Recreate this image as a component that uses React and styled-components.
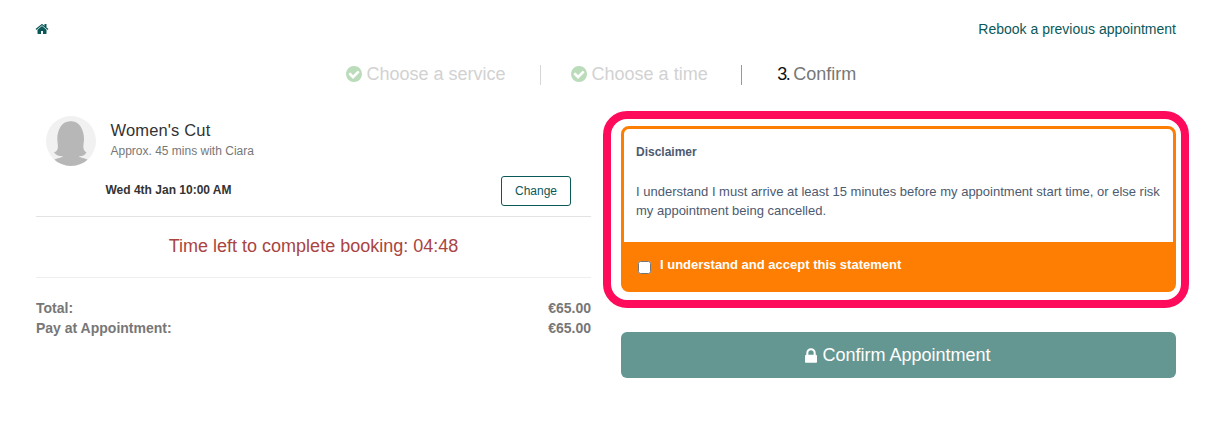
import React from 'react';

import styled, { createGlobalStyle } from "styled-components";


const GlobalStyle = createGlobalStyle`
    * {
        box-sizing: border-box;
    }

    body {
        margin: 0;
        background-color: #fff;
        font-family: "Liberation Sans", Arial, sans-serif;
        font-size: 14px;
        line-height: 20px;
        color: #333;
    }

    h3, p {
        margin: 0;
    }
`;

const HomeIcon = () => (
    <svg width="14" height="14" viewBox="0 0 1792 1792" fill="currentColor">
        <path d="M1472 992v480q0 26-19 45t-45 19h-384v-384h-256v384h-384q-26 0-45-19t-19-45v-480q0-1 .5-3t.5-3l575-474 575 474q1 2 1 6zm223-69l-62 74q-8 9-21 11h-3q-13 0-21-7l-692-577-692 577q-12 8-24 7-13-2-21-11l-62-74q-8-10-7-23.5t11-21.5l719-599q32-26 76-26t76 26l244 204v-195q0-14 9-23t23-9h192q14 0 23 9t9 23v408l219 182q10 8 11 21.5t-7 23.5z" />
    </svg>
);

const CheckIcon = () => (
    <svg width="16" height="16" viewBox="128 128 1536 1536" fill="#bbdcbb">
        <path d="M1412 734q0-28-18-46l-91-90q-19-19-45-19t-45 19l-408 407-226-226q-19-19-45-19t-45 19l-91 90q-18 18-18 46 0 27 18 45l362 362q19 19 45 19 27 0 46-19l543-543q18-18 18-45zm252 162q0 209-103 385.5t-279.5 279.5-385.5 103-385.5-103-279.5-279.5-103-385.5 103-385.5 279.5-279.5 385.5-103 385.5 103 279.5 279.5 103 385.5z" />
    </svg>
);

const LockIcon = () => (
    <svg width="12" height="15" viewBox="320 128 1152 1408" fill="currentColor">
        <path d="M640 768h512v-192q0-106-75-181t-181-75-181 75-75 181v192zm832 96v576q0 40-28 68t-68 28h-960q-40 0-68-28t-28-68v-576q0-40 28-68t68-28h32v-192q0-184 132-316t316-132 316 132 132 316v192h32q40 0 68 28t28 68z" />
    </svg>
);

const Avatar = () => (
    <svg width="50" height="50" viewBox="0 0 50 50">
        <clipPath id="avatar-clip">
            <circle cx="25" cy="25" r="25" />
        </clipPath>
        <g clipPath="url(#avatar-clip)">
            <rect width="50" height="50" fill="#f1f1f1" />
            <path fill="#b7b7b7" d="M25 5.200C33 4.500 38 14 38 22.500C38 29 35.500 33 40.500 36.500C38.500 40 35.500 40.300 33 40.100C34 42.300 38 41.500 43 44.500V50H7V44.500C12 41.500 16 42.300 17 40.100C14.500 40.300 10.500 40 8 36.500C14 34 11.300 29 11.300 22.500C11.300 14 16 4.500 25 5.200Z" />
        </g>
    </svg>
);


export const App = () => {
  return (
    <Page>
        <GlobalStyle />
        <TopBar>
            <HomeLink href="#"><HomeIcon /></HomeLink>
            <RebookLink href="#">Rebook a previous appointment</RebookLink>
        </TopBar>
        <Steps>
            <Step $done><CheckIcon /><span>Choose a service</span></Step>
            <Divider $faded />
            <Step $done><CheckIcon /><span>Choose a time</span></Step>
            <Divider />
            <Step><b>3.</b><span>Confirm</span></Step>
        </Steps>
        <Columns>
            <div>
                <Service>
                    <Avatar />
                    <div className="desc">
                        <h3>Women's Cut</h3>
                        <p>Approx. 45 mins with Ciara</p>
                    </div>
                </Service>
                <Slot>
                    <span>Wed 4th Jan 10:00 AM</span>
                    <ChangeButton>Change</ChangeButton>
                </Slot>
                <Countdown>Time left to complete booking: 04:48</Countdown>
                <Totals>
                    <TotalRow><span>Total:</span><span>€65.00</span></TotalRow>
                    <TotalRow><span>Pay at Appointment:</span><span>€65.00</span></TotalRow>
                </Totals>
            </div>
            <div>
                <DisclaimerCard>
                    <DisclaimerText>
                        <h3>Disclaimer</h3>
                        <p>I understand I must arrive at least 15 minutes before my appointment start time, or else risk my appointment being cancelled.</p>
                    </DisclaimerText>
                    <Accept>
                        <input type="checkbox" />
                        <span>I understand and accept this statement</span>
                    </Accept>
                    <Highlight />
                </DisclaimerCard>
                <ConfirmButton><LockIcon /><span>Confirm Appointment</span></ConfirmButton>
            </div>
        </Columns>
    </Page>
  );
}

const Page = styled.div`
    width: 1218px;
    height: 426px;
    padding: 19px 42px 0 36px;
    overflow: hidden;
`;

const TopBar = styled.div`
    display: flex;
    justify-content: space-between;
    height: 46px;
`;

const HomeLink = styled.a`
    color: #0b5859;
    margin-left: -1px;
    padding-top: 3px;

    svg {
        display: block;
    }
`;

const RebookLink = styled.a`
    color: #0b5859;
    text-decoration: none;
`;

const Steps = styled.div`
    display: flex;
    align-items: center;
    height: 20px;
    padding-left: 310px;
`;

const Step = styled.div`
    display: flex;
    align-items: center;
    gap: ${props => props.$done ? "4.5px" : "4px"};
    font-size: 18px;
    color: ${props => props.$done ? "#d2d2d2" : "#777"};

    svg {
        margin-top: -2px;
    }

    span {
        padding-bottom: 2px;
    }

    b {
        padding-bottom: 2px;
        color: #111;
        font-weight: normal;
        letter-spacing: -1.5px;
    }
`;

const Divider = styled.div`
    width: 1px;
    height: 20px;
    margin: 0 ${props => props.$faded ? "30px" : "35px"} 0 ${props => props.$faded ? "34.5px" : "33.5px"};
    background-color: ${props => props.$faded ? "#d6d6d6" : "#999"};
`;

const Columns = styled.div`
    display: grid;
    grid-template-columns: 555px 555px;
    gap: 30px;
    padding-top: 31px;
`;

const Service = styled.div`
    display: flex;
    height: 50px;
    padding-left: 10px;

    .desc {
        padding: 4px 0 0 14.5px;
    }

    h3 {
        margin-bottom: 1px;
        font-size: 16.5px;
        font-weight: normal;
        letter-spacing: 0.15px;
        line-height: 20px;
    }

    p {
        font-size: 12px;
        color: #777;
    }
`;

const Slot = styled.div`
    display: flex;
    align-items: flex-start;
    justify-content: space-between;
    height: 51px;
    padding: 10px 20px 0 69.5px;
    border-bottom: 1px solid #e3e3e3;
    font-size: 12px;
    font-weight: bold;

    span {
        padding-top: 4px;
    }
`;

const ChangeButton = styled.button`
    width: 70px;
    height: 30px;
    padding: 0;
    border: 1px solid #0b5859;
    border-radius: 3px;
    background-color: #fff;
    color: #0b5859;
    font-family: inherit;
    font-size: 12px;
`;

const Countdown = styled.div`
    height: 61px;
    padding-top: 19px;
    border-bottom: 1px solid #eee;
    color: #a94442;
    font-size: 18px;
    text-align: center;
`;

const Totals = styled.div`
    padding-top: 20px;
    color: #777;
    font-weight: bold;
`;

const TotalRow = styled.div`
    display: flex;
    justify-content: space-between;
`;

const DisclaimerCard = styled.div`
    position: relative;
    height: 166px;
    margin-top: 10px;
    border: 3px solid #fd7e02;
    border-radius: 8px;
    color: #4d5a70;
`;

const DisclaimerText = styled.div`
    height: 113px;
    padding: 13px 12px 0;
    font-size: 13px;

    h3 {
        margin-bottom: 20px;
        font-size: 12px;
    }

    p {
        line-height: 19px;
    }
`;

const Accept = styled.label`
    display: flex;
    height: 47px;
    padding: 13px 14px 0;
    background-color: #fd7e02;
    color: #fff;
    font-size: 13px;
    font-weight: bold;

    input {
        width: 13px;
        height: 13px;
        margin: 6px 9px 0 0;
    }
`;

// ring drawn round the whole disclaimer
const Highlight = styled.div`
    position: absolute;
    top: -18px;
    right: -16px;
    bottom: -19px;
    left: -21px;
    border: 8px solid #ff0b5b;
    border-radius: 24px;
    pointer-events: none;
`;

const ConfirmButton = styled.button`
    display: flex;
    align-items: center;
    justify-content: center;
    gap: 5px;
    width: 100%;
    height: 46px;
    margin-top: 40px;
    padding: 0 1px 0 0;
    border: 0;
    border-radius: 6px;
    background-color: #659792;
    color: #fff;
    font-family: inherit;
    font-size: 18px;
`;


export default App;
